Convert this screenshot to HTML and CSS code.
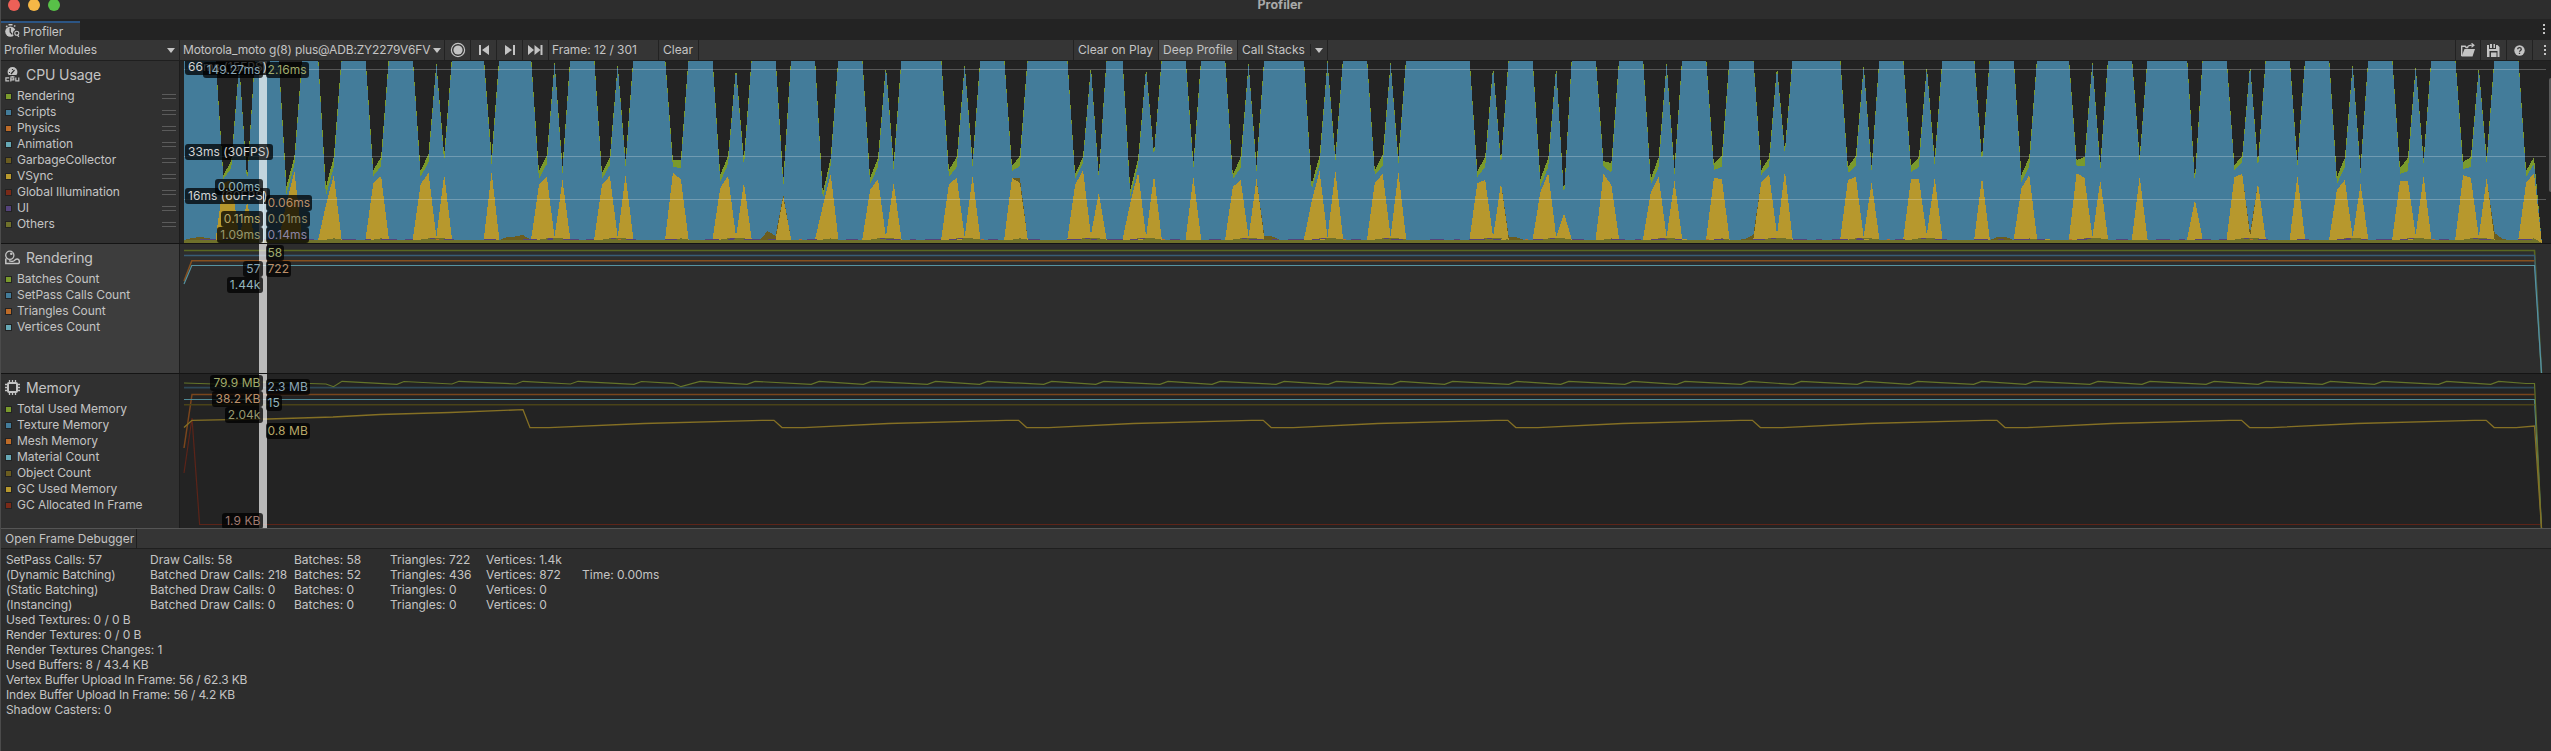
FILE: index.html
```html
<!DOCTYPE html>
<html lang="en">
<head>
<meta charset="utf-8">
<title>Profiler</title>
<link rel="stylesheet" href="styles.css">
</head>
<body>
<div class="window">
  <header class="titlebar">
    <div class="lights"><i class="light red"></i><i class="light amber"></i><i class="light green"></i></div>
    <span class="title">Profiler</span>
  </header>

  <nav class="tabs">
    <div class="tab">
      <svg class="tab-icon" width="15" height="14" viewBox="0 0 15 14"><path d="M3.5 0h4v1.6h-4zM0.6 2.6l1.3-1.3 1 1-1.3 1.3zM8.6 2l1.2-1 1 1.1-1.2 1z" fill="#c4c4c4"/><circle cx="5.4" cy="7.6" r="5.2" fill="#c4c4c4"/><path d="M5.2 4v4l2 2.4" stroke="#333" stroke-width="1.3" fill="none"/><circle cx="11.6" cy="9.4" r="3.6" fill="#333"/><circle cx="11.8" cy="9.2" r="2" fill="none" stroke="#c4c4c4" stroke-width="1.1"/><path d="M12.3 10.8l1.6 2" stroke="#c4c4c4" stroke-width="1.2"/></svg>
      <span>Profiler</span>
    </div>
    <svg class="kebab" width="2" height="11" viewBox="0 0 2 11"><path d="M0 0h2v2H0zM0 4h2v2H0zM0 8h2v2H0z" fill="#c4c4c4"/></svg>
  </nav>

  <div class="toolbar">
    <div class="cell modules"><span>Profiler Modules</span><i class="caret"></i></div>
    <div class="cell device"><span>Motorola_moto g(8) plus@ADB:ZY2279V6FV</span><i class="caret"></i></div>
    <div class="cell icon"><svg width="16" height="16" viewBox="0 0 16 16"><circle cx="8" cy="8" r="6.6" fill="none" stroke="#c4c4c4" stroke-width="1.2"/><circle cx="8" cy="8" r="4.6" fill="#c4c4c4"/></svg></div>
    <div class="cell icon"><svg width="12" height="10" viewBox="0 0 12 10"><path d="M1 0h2v10H1zM11 0v10L4 5z" fill="#c4c4c4"/></svg></div>
    <div class="cell icon"><svg width="12" height="10" viewBox="0 0 12 10"><path d="M9 0h2v10H9zM1 0v10l7-5z" fill="#c4c4c4"/></svg></div>
    <div class="cell icon"><svg width="15" height="10" viewBox="0 0 15 10"><path d="M0 0v10l6-5zM6.500 0v10l6-5zM12.500 0h2v10h-2z" fill="#c4c4c4"/></svg></div>
    <div class="cell frame">Frame: 12 / 301</div>
    <div class="cell clear">Clear</div>
    <div class="cell spacer-a"></div>
    <div class="cell clear-play">Clear on Play</div>
    <div class="cell deep">Deep Profile</div>
    <div class="cell stacks"><span>Call Stacks</span><b class="split"></b><i class="caret"></i></div>
    <div class="cell spacer-b"></div>
    <div class="cell load"><svg width="15" height="14" viewBox="0 0 15 14"><path d="M.7 13V3.200h3.500l1 1.300h2" stroke="#c4c4c4" stroke-width="1.400" fill="none"/><path d="M.5 13.500L3.500 6H14l-2.500 7.500z" fill="#c4c4c4"/><path d="M6.500 4.500C7 2.500 9 2 12 2.200M10.500.2L13 2.300l-2.500 2" stroke="#c4c4c4" stroke-width="1.100" fill="none"/></svg></div>
    <div class="cell save"><svg width="13" height="13" viewBox="0 0 13 13"><path d="M0 1h2v4h7V1h1.500L12.500 3v10h-2V7H2.500v6H0zM3 0h2v4H3zM6.500 0H8v4H6.500zM4 8.500h5.500V13H4z" fill="#c4c4c4"/></svg></div>
    <div class="cell help"><svg width="11" height="11" viewBox="0 0 11 11"><circle cx="5.500" cy="5.500" r="5.200" fill="#c4c4c4"/><path d="M3.700 4.300C3.700 2 7.300 2.100 7.300 4.200c0 1.200-1.800 1.300-1.800 2.600M5.500 7.700v1.400" stroke="#353535" stroke-width="1.300" fill="none"/></svg></div>
    <div class="cell more"><svg width="2" height="11" viewBox="0 0 2 11"><path d="M0 0h2v2H0zM0 4h2v2H0zM0 8h2v2H0z" fill="#c4c4c4"/></svg></div>
  </div>

  <main class="modules-list">
    <section class="module cpu">
      <div class="legend">
        <h2><svg width="15" height="15" viewBox="0 0 15 15"><circle cx="7.500" cy="5" r="4.900" fill="#c4c4c4"/><path d="M6 7l3.500-4M4 5.500h1M7.500 2v1" stroke="#303030" stroke-width="1.200"/><path d="M4 8.500h7" stroke="#303030" stroke-width="1"/><path d="M4.200 10.900H.9v3h3.300M5.800 14.500v-3.600h3v2h-3M10.800 10.400v3.500h3v-3.500" fill="none" stroke="#c4c4c4" stroke-width="1.200"/></svg>CPU Usage</h2>
        <ul>
          <li><i class="c-green"></i>Rendering<b class="grip"></b></li>
          <li><i class="c-blue"></i>Scripts<b class="grip"></b></li>
          <li><i class="c-orange"></i>Physics<b class="grip"></b></li>
          <li><i class="c-teal"></i>Animation<b class="grip"></b></li>
          <li><i class="c-brown"></i>GarbageCollector<b class="grip"></b></li>
          <li><i class="c-yellow"></i>VSync<b class="grip"></b></li>
          <li><i class="c-red"></i>Global Illumination<b class="grip"></b></li>
          <li><i class="c-purple"></i>UI<b class="grip"></b></li>
          <li><i class="c-olive"></i>Others<b class="grip"></b></li>
        </ul>
      </div>
      <div class="chart">
        <svg id="cpu-chart" class="plot" width="2371" height="182" viewBox="180 0 2371 182" shape-rendering="crispEdges"></svg>
        <div class="cursor"></div>
        <span class="tag fps" style="left:5px;top:-2px">66ms (15FPS)</span>
        <span class="tag fps" style="left:5px;top:83px">33ms (30FPS)</span>
        <span class="tag fps" style="left:5px;top:127px">16ms (60FPS)</span>
        <span class="tag before t-blue" style="top:1px">149.27ms</span>
        <span class="tag after t-green" style="top:1px">2.16ms</span>
        <span class="tag before t-teal" style="top:118px">0.00ms</span>
        <span class="tag after t-orange" style="top:134px">0.06ms</span>
        <span class="tag before t-yellow" style="top:150px">0.11ms</span>
        <span class="tag after t-brown" style="top:150px">0.01ms</span>
        <span class="tag before t-olive" style="top:166px">1.09ms</span>
        <span class="tag after t-purple" style="top:166px">0.14ms</span>
        <div class="hairline"></div>
      </div>
    </section>

    <section class="module rendering selected">
      <div class="legend">
        <h2><svg width="15" height="15" viewBox="0 0 15 15"><circle cx="4.800" cy="5.300" r="4.100" fill="none" stroke="#c4c4c4" stroke-width="1.300"/><circle cx="6.300" cy="3.800" r="1.300" fill="#c4c4c4"/><path d="M.8 8.500V13.600h12.600c1.200-.2 1.200-2.600.4-3.800-1-1.100-2.600-.8-3.400-.2-1.200 1.600-4 2.400-6.400 1" fill="none" stroke="#c4c4c4" stroke-width="1.500"/></svg>Rendering</h2>
        <ul>
          <li><i class="c-green"></i>Batches Count</li>
          <li><i class="c-blue"></i>SetPass Calls Count</li>
          <li><i class="c-orange"></i>Triangles Count</li>
          <li><i class="c-teal"></i>Vertices Count</li>
        </ul>
      </div>
      <div class="chart">
        <svg class="plot" width="2371" height="129" viewBox="180 244 2371 129" fill="none">
          <path d="M184 250.500H2534.500L2541.500 373" stroke="#596721" stroke-width="1.600"/>
          <path d="M184 255.500H2534.500L2541.500 373" stroke="#385c74" stroke-width="1.300"/>
          <path d="M184 281L191.800 260.700H2534.500" stroke="#86501f" stroke-width="1.500"/>
          <path d="M184 284L191.800 265.500H2534.500L2541.500 373" stroke="#5693a0" stroke-width="1.200"/>
        </svg>
        <div class="cursor"></div>
        <span class="tag after t-green" style="top:1px">58</span>
        <span class="tag before t-blue" style="top:17px">57</span>
        <span class="tag after t-orange" style="top:17px">722</span>
        <span class="tag before t-teal" style="top:33px">1.44k</span>
      </div>
    </section>

    <section class="module memory">
      <div class="legend">
        <h2><svg width="15" height="15" viewBox="0 0 15 15"><path d="M4.500 0v15M7.500 0v15M10.500 0v15M0 4.500h15M0 7.500h15M0 10.500h15" stroke="#c4c4c4" stroke-width="1.300"/><rect x="3" y="3" width="9" height="9" rx="1" fill="#303030" stroke="#c4c4c4" stroke-width="2"/></svg>Memory</h2>
        <ul>
          <li><i class="c-green"></i>Total Used Memory</li>
          <li><i class="c-blue"></i>Texture Memory</li>
          <li><i class="c-orange"></i>Mesh Memory</li>
          <li><i class="c-teal"></i>Material Count</li>
          <li><i class="c-brown"></i>Object Count</li>
          <li><i class="c-yellow"></i>GC Used Memory</li>
          <li><i class="c-red"></i>GC Allocated In Frame</li>
        </ul>
      </div>
      <div class="chart">
        <svg id="memory-chart" class="plot" width="2371" height="154" viewBox="180 374 2371 154" fill="none"></svg>
        <div class="cursor"></div>
        <span class="tag before t-green" style="top:1px">79.9 MB</span>
        <span class="tag after t-blue" style="top:5px">2.3 MB</span>
        <span class="tag before t-orange" style="top:17px">38.2 KB</span>
        <span class="tag after t-teal" style="top:21px">15</span>
        <span class="tag before t-olive" style="top:33px">2.04k</span>
        <span class="tag after t-yellow" style="top:49px">0.8 MB</span>
        <span class="tag before t-red" style="top:139px">1.9 KB</span>
      </div>
    </section>
    <div class="scrollbar"></div>
  </main>

  <div class="detail-bar"><span>Open Frame Debugger</span></div>
  <div class="details">
    <div class="stats">
      <span>SetPass Calls: 57</span><span>Draw Calls: 58</span><span>Batches: 58</span><span>Triangles: 722</span><span>Vertices: 1.4k</span><span></span>
      <span>(Dynamic Batching)</span><span>Batched Draw Calls: 218</span><span>Batches: 52</span><span>Triangles: 436</span><span>Vertices: 872</span><span>Time: 0.00ms</span>
      <span>(Static Batching)</span><span>Batched Draw Calls: 0</span><span>Batches: 0</span><span>Triangles: 0</span><span>Vertices: 0</span><span></span>
      <span>(Instancing)</span><span>Batched Draw Calls: 0</span><span>Batches: 0</span><span>Triangles: 0</span><span>Vertices: 0</span><span></span>
    </div>
    <p>Used Textures: 0 / 0 B</p>
    <p>Render Textures: 0 / 0 B</p>
    <p>Render Textures Changes: 1</p>
    <p>Used Buffers: 8 / 43.4 KB</p>
    <p class="tight">Vertex Buffer Upload In Frame: 56 / 62.3 KB</p>
    <p class="tight">Index Buffer Upload In Frame: 56 / 4.2 KB</p>
    <p>Shadow Casters: 0</p>
  </div>
</div>
<script src="charts.js"></script>
</body>
</html>
```
FILE: styles.css
```css
* { box-sizing: border-box; }
body { margin: 0; background: #2d2d2d; color: #c4c4c4; font: 12px/16px Inter, "Liberation Sans", sans-serif; overflow: hidden; }
.window { width: 2551px; height: 751px; display: flex; flex-direction: column; background: #2d2d2d; border-left: 1px solid #4b4b4b; white-space: nowrap; }

.titlebar { height: 19px; display: grid; grid-template-columns: 1fr auto 1fr; background: #2d2d2d; overflow: hidden; }
.lights { display: flex; gap: 8px; padding-left: 7px; margin-top: -1px; }
.light { width: 12px; height: 12px; border-radius: 50%; }
.red { background: #ed6057; }
.amber { background: #f5b746; }
.green { background: #58c148; }
.title { font-weight: 700; font-size: 12.500px; line-height: 16px; color: #a9a9a9; margin-top: -3.500px; padding-left: 8px; }

.tabs { height: 21px; background: #232323; display: flex; justify-content: space-between; align-items: flex-end; }
.tab { width: 79px; height: 19px; background: #353535; border-top: 2px solid #2c5584; display: flex; align-items: center; gap: 3px; padding-left: 4px; letter-spacing: -.1px; }
.tab-icon { margin-top: -1px; }
.kebab { margin: 0 6px 5px 0; }

.toolbar { height: 21px; display: flex; background: #353535; border-bottom: 1px solid #1f1f1f; }
.cell { display: flex; align-items: center; border-right: 1px solid #222; flex: none; }
.caret { border: 4px solid transparent; border-top: 5px solid #c4c4c4; border-bottom: 0; }
.modules { width: 179px; padding: 0 4px 0 3px; justify-content: space-between; }
.device { width: 265px; padding: 0 3px; justify-content: space-between; letter-spacing: -.16px; }
.icon { width: 26px; justify-content: center; }
.frame { width: 110px; padding-left: 3px; letter-spacing: -.04px; }
.clear { width: 40px; padding-left: 4px; }
.spacer-a { width: 375px; }
.clear-play { width: 85px; padding-left: 4px; }
.deep { width: 79px; padding-left: 4px; background: #494949; }
.stacks { width: 90px; padding-left: 4px; }
.split { width: 1px; height: 12px; background: #222; margin: 0 4px 0 5px; }
.spacer-b { width: 1128px; }
.load { width: 25px; justify-content: center; }
.save, .help { width: 26px; justify-content: center; }
.more { flex: 1; border: 0; padding-left: 11px; }

.modules-list { position: relative; display: flex; flex-direction: column; height: 467px; }
.module { display: flex; border-bottom: 1px solid #141414; }
.cpu { height: 183px; }
.rendering { height: 130px; }
.memory { height: 154px; border-bottom: 0; }
.legend { width: 179px; background: #303030; border-right: 1px solid #1c1c1c; padding-left: 4px; flex: none; letter-spacing: -.06px; }
.selected .legend { background: #3d3d3d; }
.legend h2 { margin: 5px 0; font-size: 14px; font-weight: 400; line-height: 17px; height: 17px; display: flex; align-items: center; gap: 6px; letter-spacing: -.1px; }
.rendering h2, .memory h2 { margin-bottom: 5px; }
.legend ul { list-style: none; margin: 0; padding: 0; }
.legend li { height: 16px; display: flex; align-items: center; padding-right: 3px; }
.legend li i { width: 7px; height: 7px; border: 1px solid #222; margin-right: 5px; }
.grip { width: 14px; height: 5px; border: solid #5b5b5b; border-width: 1px 0; margin-left: auto; }
.c-green { background: #7a9a2c; }
.c-blue { background: #437c9a; }
.c-orange { background: #bd6b28; }
.c-teal { background: #66a8b5; }
.c-brown { background: #6b5d20; }
.c-yellow { background: #b7982d; }
.c-red { background: #7a2a18; }
.c-purple { background: #55437c; }
.c-olive { background: #6f712b; }

.chart { position: relative; flex: 1; background: #232323; overflow: hidden; }
.selected .chart { background: #2d2d2d; }
.plot { display: block; }
.cursor { position: absolute; left: 79px; top: 0; bottom: 0; width: 8px; background: rgba(255, 255, 255, .68); }
.hairline { position: absolute; left: 83px; top: 130px; bottom: 0; width: 1px; background: #d5e2e8; }
.tag { position: absolute; padding: 0 3px; line-height: 16px; border-radius: 3px; background: rgba(0, 0, 0, .75); color: #c4c4c4; letter-spacing: .06px; }
.before { right: 2288.500px; padding: 0 2px 0 3px; }
.after { left: 85.500px; padding: 0 2px; }
.fps { color: #d4d4d4; }
.t-green { color: #a0ab6c; }
.t-blue { color: #8ba6b4; }
.t-teal { color: #93b5bc; }
.t-orange { color: #bb906a; }
.t-yellow { color: #b8a868; }
.t-brown { color: #8f8966; }
.t-olive { color: #97986f; }
.t-purple { color: #8c85a5; }
.t-red { color: #a17a71; }
.scrollbar { position: absolute; right: 0; top: 17px; width: 2px; height: 114px; background: #5a5a5a; border-radius: 2px 0 0 2px; }

.detail-bar { height: 21px; background: #353535; border-top: 1px solid #555; border-bottom: 1px solid #1f1f1f; display: flex; }
.detail-bar span { width: 136px; padding-left: 4px; line-height: 20px; border-right: 1px solid #1f1f1f; }
.details { padding: 3px 0 0 5px; line-height: 15px; }
.stats { display: grid; grid-template-columns: 144px 144px 96px 96px 96px 120px; grid-auto-rows: 15px; }
.stats span:nth-child(6n + 1) { letter-spacing: -.1px; }
.details p { margin: 0; letter-spacing: -.08px; }
.details .tight { letter-spacing: -.16px; }
```
FILE: charts.js
```js
// Dips in the CPU chart: [frame, total top, scripts top, vsync top], in px from the chart's top.
const dips = [
  [5,114,118,122],[6,100,107,119],[7,2,4,176],[8,118,122,141],
  [13,125,133,142],[14,96,104,110],[18,126,135,144],[19,96,106,114],
  [24,109,115,122],[25,96,105,115],[30,110,116,123],[31,93,101,112],[32,2,4,176],[33,94,101,113],
  [39,95,104,111],[45,110,118,124],[46,94,103,116],[47,1,3,176],[48,105,112,119],
  [53,112,118,124],[54,96,104,115],[55,3,5,176],[56,99,106,114],[62,99,106,112],[63,99,107,118],
  [68,114,121,127],[69,95,103,115],[70,6,8,176],[71,98,106,121],[76,119,126,136],
  [81,132,138,145],[82,97,104,113],[87,117,123,129],[88,97,106,118],[89,4,6,176],[90,102,110,122],
  [97,109,116,123],[98,96,106,117],[99,3,5,176],[100,99,106,115],[105,105,110,117],[106,95,105,122],
  [113,113,118,124],[114,96,102,109],[115,5,7,174],[116,114,118,132],
  [120,129,136,142],[121,97,104,111],[122,6,8,176],[123,92,96,114],[128,102,108,116],
  [133,114,118,126],[134,96,107,119],[135,2,4,176],[136,104,110,118],
  [143,123,128,140],[144,95,104,110],[145,0,2,176],[146,95,101,110],
  [151,109,114,122],[152,94,105,113],[153,1,3,176],[154,97,104,111],
  [164,110,116,122],[165,96,106,119],[166,5,7,176],[167,100,105,122],
  [172,118,125,131],[173,97,106,112],[174,5,7,176],[175,133,137,152],
  [180,100,105,113],[181,102,112,124],[186,118,124,131],[187,96,106,116],[188,2,4,176],[189,107,113,120],
  [194,103,109,117],[195,95,106,118],[200,109,114,121],[201,97,105,113],[202,5,7,174],[203,89,94,110],
  [211,106,112,119],[212,95,105,116],[213,4,6,176],[214,105,110,121],
  [219,105,111,118],[220,96,106,118],[221,5,7,174],[222,98,105,117],[228,97,102,116],
  [233,114,121,127],[234,96,105,114],[240,99,105,112],[241,96,105,117],[242,0,2,176],[243,104,110,119],
  [248,96,101,115],[255,118,123,139],[260,104,109,116],[261,95,101,113],[262,3,5,176],[263,102,108,122],
  [268,101,106,115],[273,116,123,129],[274,97,106,119],[275,3,5,176],[276,107,112,123],
  [281,107,113,120],[282,97,110,120],[283,5,7,174],[284,98,103,115],
  [289,101,108,114],[290,96,106,117],[291,6,8,176],[292,97,103,117],
  [297,110,116,122],[298,96,103,112],[299,182,182,182]
];
// Garbage collector height per frame.
const gc = {1:2,2:3,3:2,41:3,42:3.5,43:5,74:9,75:4,76:2,106:5,137:4,138:3.5,168:3,169:2.5,198:1,199:5,230:3,231:3,262:4,293:7,294:1};

const x0 = 184, step = 7.886, frames = 300, base = 179;
const byFrame = new Map(dips.map(d => [d[0], d]));
const at = f => byFrame.get(f) || [f, -6, -2, base];
const px = f => (x0 + f * step).toFixed(1);
const area = (fill, fn) => {
  let d = `M${x0} 182`;
  for (let f = 0; f < frames; f++) d += `L${px(f)} ${fn(f)}`;
  return `<path fill="${fill}" d="${d}L${px(frames - 1)} 182Z"/>`;
};

let cpu = area('#7a9a2c', f => at(f)[1]) + area('#437c9a', f => at(f)[2])
  + area('#6b5d20', f => at(f)[3] - (gc[f] || 0)) + area('#b7982d', f => at(f)[3]);
cpu += area('#6f712b', f => f === 299 ? 182 : byFrame.has(f) && byFrame.has(f - 1) ? 177.4 : 178.6);
for (let f = 1; f < 297; f++) {
  const k = (f * 37) % 23;
  if (k < 6) cpu += `<rect x="${px(f)}" y="178" width="${6 + k * 2}" height="1" fill="#55437c"/>`;
  else if (k === 11) cpu += `<rect x="${px(f)}" y="178" width="3" height="1" fill="#bd6b28"/>`;
  else if (k === 15) cpu += `<rect x="${px(f)}" y="178" width="5" height="1" fill="#b7982d"/>`;
  if (at(f)[1] < 8 && byFrame.has(f)) cpu += `<rect x="${px(f - 0.8)}" y="177" width="5" height="1" fill="#55437c"/>`;
}
for (const y of [8, 95, 138]) cpu += `<rect x="184" y="${y}" width="2362" height="1" fill="#fff" opacity=".24"/>`;
document.getElementById('cpu-chart').innerHTML = cpu;

// Memory chart lines.
const line = (color, d, w = 1.2) => `<path stroke="${color}" stroke-width="${w}" d="${d}"/>`;
let total = 'M184 383L230 384.5L262 382L326 384L333.500 386.700L342 381.300L397 384.400L404 381.500L452 384L459 381.300L516 384L523 381.300L570.500 384L578 381.300L634 384.300L641.500 381.500L673 383.300L681 386.700L700 381.300';
for (let i = 1; i <= 31; i++) {
  const x = 700 + i * 58.12 + (i % 2 ? -3 : 3);
  total += `L${(x - 8).toFixed(1)} 384.400L${x.toFixed(1)} 381.400`;
}
total += 'L2526 383.500H2534.500L2541.500 528';
let used = 'M184 427.500L192 420.300L268 419L333 417L380 414.500L450 412.500L523 409.700L530 427.700H549';
for (let x = 774; x < 2500; x += 244.6) used += `L${x - 130} 423.500L${x - 12} 420.300H${x}L${x + 8} 427.600H${x + 30}`;
used += 'L2534.500 426L2541.500 528';
document.getElementById('memory-chart').innerHTML =
  line('#2e4856', 'M184 387.700H2534.500', 1.800) +
  line('#7a451c', 'M184 448L192 394.400H2534.500', 1.500) +
  line('#4f8995', 'M184 399.500H2534.500L2541.500 528') +
  line('#4a4318', 'M184 404.700H2534.500', 1.600) +
  line('#5c2419', 'M184 473L192 418L199.600 524.500H2541', 1.200) +
  line('#64742a', total) +
  line('#857024', used, 1.300);
```
